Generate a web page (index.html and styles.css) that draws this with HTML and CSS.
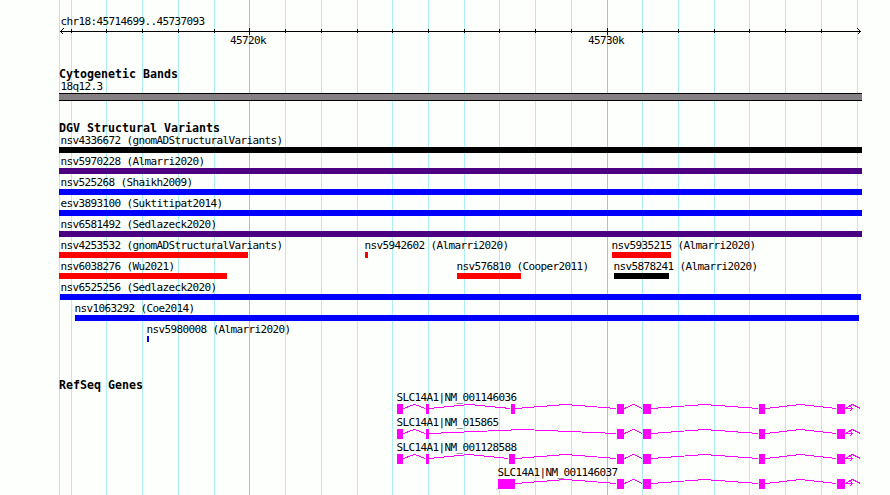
FILE: index.html
```html
<!DOCTYPE html>
<html lang="en">
<head>
<meta charset="utf-8">
<title>chr18:45714699..45737093</title>
<link rel="stylesheet" href="styles.css">
</head>
<body>
<main class="browser">
  <svg class="gridlines" width="890" height="495" aria-hidden="true">
    <path class="minor" d="M59.5 0V495M71.5 0V495M106.5 0V495M142.5 0V495M178.5 0V495M214.5 0V495M285.5 0V495M321.5 0V495M357.5 0V495M392.5 0V495M428.5 0V495M464.5 0V495M499.5 0V495M535.5 0V495M571.5 0V495M642.5 0V495M678.5 0V495M714.5 0V495M749.5 0V495M785.5 0V495M821.5 0V495M857.5 0V495"/>
    <path class="major" d="M249.5 0V495M607.5 0V495"/>
  </svg>

  <header class="ruler">
    <div class="label region">chr18:45714699..45737093</div>
    <svg class="axis" width="890" height="7" aria-hidden="true">
      <path d="M60 3.5H861M63.5 .5L60.5 3.5L63.5 6.5M857.5 .5L860.5 3.5L857.5 6.5"/>
      <path d="M71.5 1V5M106.5 1V5M142.5 1V5M178.5 1V5M214.5 1V5M285.5 1V5M321.5 1V5M357.5 1V5M392.5 1V5M428.5 1V5M464.5 1V5M499.5 1V5M535.5 1V5M571.5 1V5M642.5 1V5M678.5 1V5M714.5 1V5M749.5 1V5M785.5 1V5M821.5 1V5M249.5 0V7M607.5 0V7"/>
    </svg>
    <div class="lane scale">
      <span class="label" style="--x:230px">45720k</span>
      <span class="label" style="--x:588px">45730k</span>
    </div>
  </header>

  <section class="track bands">
    <h2>Cytogenetic Bands</h2>
    <div class="lane"><div class="feature edge" style="--x:59px;--w:803px"><span class="label">18q12.3</span><i class="band"></i></div></div>
  </section>

  <section class="track variants">
    <h2>DGV Structural Variants</h2>
    <div class="lane"><div class="feature edge" style="--x:59px;--w:803px"><span class="label">nsv4336672 (gnomADStructuralVariants)</span><i class="bar black"></i></div></div>
    <div class="lane"><div class="feature edge" style="--x:59px;--w:803px"><span class="label">nsv5970228 (Almarri2020)</span><i class="bar indigo"></i></div></div>
    <div class="lane"><div class="feature edge" style="--x:59px;--w:803px"><span class="label">nsv525268 (Shaikh2009)</span><i class="bar blue"></i></div></div>
    <div class="lane"><div class="feature edge" style="--x:59px;--w:803px"><span class="label">esv3893100 (Suktitipat2014)</span><i class="bar blue"></i></div></div>
    <div class="lane"><div class="feature edge" style="--x:59px;--w:803px"><span class="label">nsv6581492 (Sedlazeck2020)</span><i class="bar indigo"></i></div></div>
    <div class="lane">
      <div class="feature edge" style="--x:59px;--w:189px"><span class="label">nsv4253532 (gnomADStructuralVariants)</span><i class="bar red"></i></div>
      <div class="feature" style="--x:365px;--w:3px"><span class="label">nsv5942602 (Almarri2020)</span><i class="bar red"></i></div>
      <div class="feature" style="--x:612px;--w:59px"><span class="label">nsv5935215 (Almarri2020)</span><i class="bar red"></i></div>
    </div>
    <div class="lane">
      <div class="feature edge" style="--x:59px;--w:168px"><span class="label">nsv6038276 (Wu2021)</span><i class="bar red"></i></div>
      <div class="feature" style="--x:457px;--w:64px"><span class="label">nsv576810 (Cooper2011)</span><i class="bar red"></i></div>
      <div class="feature" style="--x:614px;--w:55px"><span class="label">nsv5878241 (Almarri2020)</span><i class="bar black"></i></div>
    </div>
    <div class="lane"><div class="feature near" style="--x:60px;--w:801px"><span class="label">nsv6525256 (Sedlazeck2020)</span><i class="bar blue"></i></div></div>
    <div class="lane"><div class="feature" style="--x:75px;--w:784px"><span class="label">nsv1063292 (Coe2014)</span><i class="bar blue"></i></div></div>
    <div class="lane"><div class="feature" style="--x:147px;--w:2px"><span class="label">nsv5980008 (Almarri2020)</span><i class="bar blue"></i></div></div>
  </section>

  <section class="track genes">
    <h2>RefSeq Genes</h2>
    <div class="gene">
      <span class="label" style="--x:396.5px">SLC14A1|NM_001146036</span>
      <svg width="890" height="10" aria-hidden="true">
        <defs>
          <g id="tail">
            <path class="exon" d="M617 0h7v10h-7zM643 0h8v10h-8zM759 0h6v10h-6zM837 0h8v10h-8z"/>
            <path class="intron" d="M624.5 4.5L633.5 .5L642.5 4.5M651.5 4.5L704.5 .5L758.5 4.5M765.5 4.5L800.5 .5L836.5 4.5M845.5 4.5L852.5 .5L860.5 4.5M845 4.5H853M849.5 1.5L852.5 4.5L849.5 7.5"/>
          </g>
        </defs>
        <path class="exon" d="M397 0h6v10h-6zM426 0h3v10h-3zM511 0h4v10h-4z"/>
        <path class="intron" d="M403.5 4.5L414.5 .5L425.5 4.5M429.5 4.5L469.5 .5L510.5 4.5M515.5 4.5L565.5 .5L616.5 4.5"/>
        <use href="#tail"/>
      </svg>
    </div>
    <div class="gene">
      <span class="label" style="--x:396.5px">SLC14A1|NM_015865</span>
      <svg width="890" height="10" aria-hidden="true">
        <path class="exon" d="M397 0h6v10h-6zM426 0h3v10h-3z"/>
        <path class="intron" d="M403.5 4.5L414.5 .5L425.5 4.5M429.5 4.5L522.5 .5L616.5 4.5"/>
        <use href="#tail"/>
      </svg>
    </div>
    <div class="gene">
      <span class="label" style="--x:396.5px">SLC14A1|NM_001128588</span>
      <svg width="890" height="10" aria-hidden="true">
        <path class="exon" d="M397 0h6v10h-6zM426 0h3v10h-3zM509 0h6v10h-6z"/>
        <path class="intron" d="M403.5 4.5L414.5 .5L425.5 4.5M429.5 4.5L468.5 .5L508.5 4.5M515.5 4.5L565.5 .5L616.5 4.5"/>
        <use href="#tail"/>
      </svg>
    </div>
    <div class="gene">
      <span class="label" style="--x:497.5px">SLC14A1|NM_001146037</span>
      <svg width="890" height="10" aria-hidden="true">
        <path class="exon" d="M498 0h17v10h-17z"/>
        <path class="intron" d="M515.5 4.5L565.5 .5L616.5 4.5"/>
        <use href="#tail"/>
      </svg>
    </div>
  </section>
</main>
</body>
</html>
```
FILE: styles.css
```css
body {
  margin: 0;
  background: #fdfffc;
  color: #000;
  font-family: "DejaVu Sans Mono", monospace;
}

svg {
  display: block;
  shape-rendering: crispEdges;
}

.browser {
  position: relative;
  width: 890px;
  height: 495px;
  overflow: hidden;
  display: flex;
  flex-direction: column;
}

.gridlines {
  position: absolute;
  inset: 0;
  z-index: -1;
}

.minor { stroke: #afeeee; }
.major { stroke: #87ceeb; }

.label {
  display: block;
  height: 15px;
  font-size: 11px;
  line-height: 18px;
  letter-spacing: -0.622px;
  white-space: pre;
}

.ruler {
  box-sizing: border-box;
  height: 66px;
  padding-top: 13px;
}

.region { margin-left: 60.5px; }

.axis {
  fill: none;
  stroke: #000;
}

.scale { margin-top: -3px; }

.lane { display: grid; }

.lane > * { grid-area: 1 / 1; }

.scale .label,
.gene .label {
  margin-left: var(--x);
}

.feature { margin-left: var(--x); }

.feature .label {
  width: 0;
  text-indent: -0.5px;
}

.edge .label { text-indent: 1.5px; }
.near .label { text-indent: 0.5px; }

.track h2 {
  height: 12px;
  margin: 0 0 0 59px;
  font-size: 11.63px;
  font-weight: bold;
  line-height: 16px;
  white-space: pre;
}

.band,
.bar {
  display: block;
  width: var(--w);
}

.bar { height: 6px; }

.band {
  box-sizing: border-box;
  height: 8px;
  background: #848084;
  border: solid #000;
  border-width: 1px 0;
}

.black { background: #000; }
.indigo { background: #4b0082; }
.blue { background: #00f; }
.red { background: #f00; }

.variants { margin-top: 19px; }
.genes { margin-top: 35px; }

.exon { fill: #f0f; }

.intron {
  fill: none;
  stroke: #f0f;
}
```
